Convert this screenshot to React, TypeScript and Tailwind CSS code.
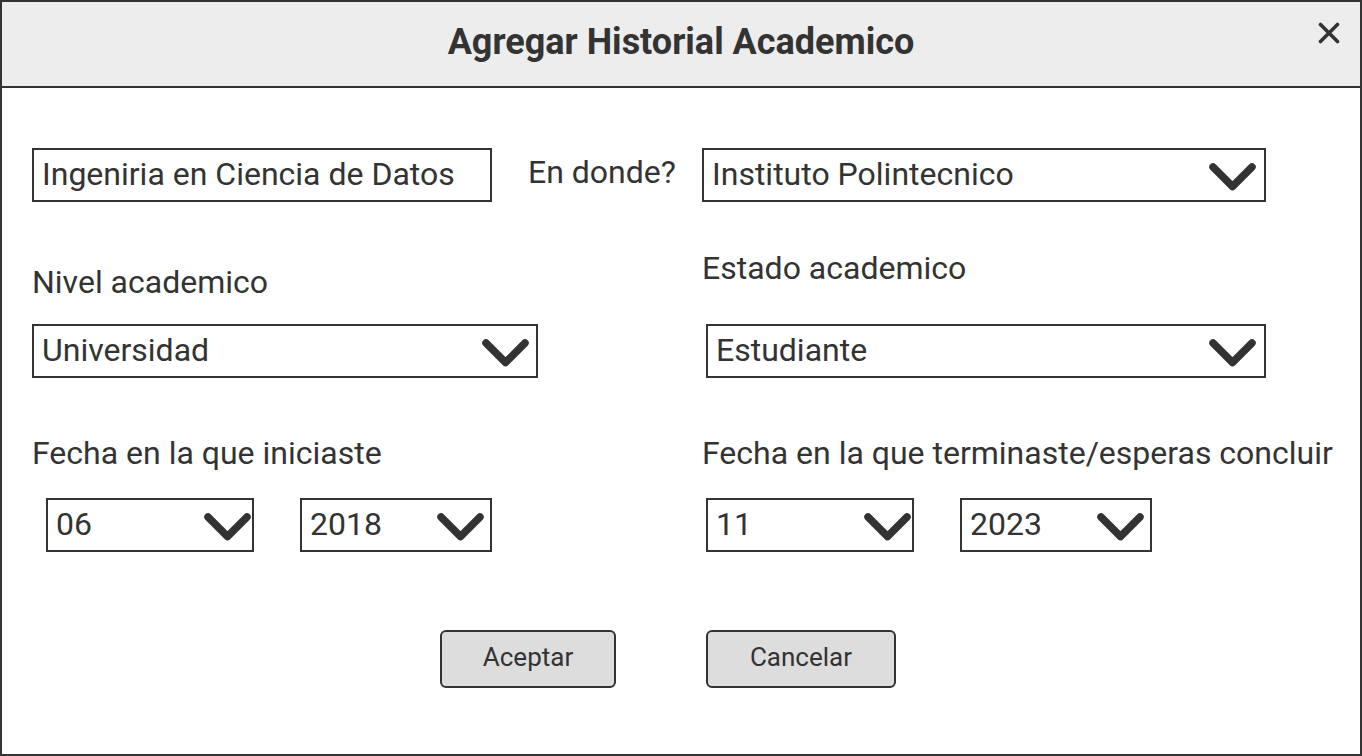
import React from "react";

function Chevron() {
  return (
    <svg width="49" height="30" viewBox="0 0 49 30" className="shrink-0">
      <path d="M5 5 L24.5 24.5 L44 5" fill="none" stroke="#333" strokeWidth="7.5" strokeLinecap="round" strokeLinejoin="round" />
    </svg>
  );
}

function Select({ value, className, chevronClass }: { value: string; className: string; chevronClass: string }) {
  return (
    <div className={`h-[54px] border-2 border-[#333] flex items-center justify-between pl-[8px] bg-white ${className}`}>
      <span className="leading-none whitespace-nowrap mb-[2px]">{value}</span>
      <div className={`flex items-center mt-[3px] ${chevronClass}`}>
        <Chevron />
      </div>
    </div>
  );
}

export default function App() {
  return (
    <div
      className="w-[1362px] h-[756px] border-2 border-[#333] bg-white flex flex-col text-[#333] text-[32px] overflow-hidden"
      style={{ fontFamily: "Roboto, 'Liberation Sans', sans-serif" }}
    >
      <div className="relative h-[86px] shrink-0 bg-[#ededed] border-b-2 border-[#333] flex items-center justify-center">
        <h1 className="text-[36px] font-bold leading-none mb-[4px]">Agregar Historial Academico</h1>
        <svg className="absolute right-[20px] top-[20px]" width="22" height="22" viewBox="0 0 22 22">
          <path d="M2.5 2.5 L19.5 19.5 M19.5 2.5 L2.5 19.5" stroke="#333" strokeWidth="3.6" strokeLinecap="round" />
        </svg>
      </div>

      {/* Row 1 */}
      <div className="mt-[60px] flex items-center h-[54px]">
        <div className="ml-[30px] w-[460px] h-[54px] border-2 border-[#333] flex items-center pl-[8px]">
          <span className="leading-none whitespace-nowrap mb-[2px]">Ingeniria en Ciencia de Datos</span>
        </div>
        <div className="w-[210px] pl-[36px] leading-none mb-[6px] whitespace-nowrap">En donde?</div>
        <Select value="Instituto Polintecnico" className="w-[564px]" chevronClass="mr-[7px]" />
      </div>

      {/* Row 2 */}
      <div className="flex">
        <div className="w-[670px] ml-[30px] flex flex-col">
          <div className="mt-[63px] h-[34px] leading-[34px]">Nivel academico</div>
          <Select value="Universidad" className="mt-[25px] w-[506px]" chevronClass="mr-[6px]" />
        </div>
        <div className="flex flex-col">
          <div className="mt-[49px] h-[34px] leading-[34px]">Estado academico</div>
          <Select value="Estudiante" className="mt-[39px] ml-[4px] w-[560px]" chevronClass="mr-[7px]" />
        </div>
      </div>

      {/* Row 3 */}
      <div className="flex">
        <div className="w-[670px] ml-[30px] flex flex-col">
          <div className="mt-[58px] h-[34px] leading-[34px]">Fecha en la que iniciaste</div>
          <div className="mt-[28px] flex">
            <Select value="06" className="ml-[14px] w-[208px]" chevronClass="mr-[0px]" />
            <Select value="2018" className="ml-[46px] w-[192px]" chevronClass="mr-[5px]" />
          </div>
        </div>
        <div className="flex flex-col">
          <div className="mt-[58px] h-[34px] leading-[34px] whitespace-nowrap">Fecha en la que terminaste/esperas concluir</div>
          <div className="mt-[28px] flex">
            <Select value="11" className="ml-[4px] w-[208px]" chevronClass="mr-[0px]" />
            <Select value="2023" className="ml-[46px] w-[192px]" chevronClass="mr-[5px]" />
          </div>
        </div>
      </div>

      {/* Buttons */}
      <div className="mt-[78px] flex">
        <button className="ml-[438px] w-[176px] h-[58px] rounded-[6px] border-2 border-[#333] bg-[#dddddd] text-[26px] leading-none flex items-center justify-center pb-[4px]">
          Aceptar
        </button>
        <button className="ml-[90px] w-[190px] h-[58px] rounded-[6px] border-2 border-[#333] bg-[#dddddd] text-[26px] leading-none flex items-center justify-center pb-[4px]">
          Cancelar
        </button>
      </div>
    </div>
  );
}
